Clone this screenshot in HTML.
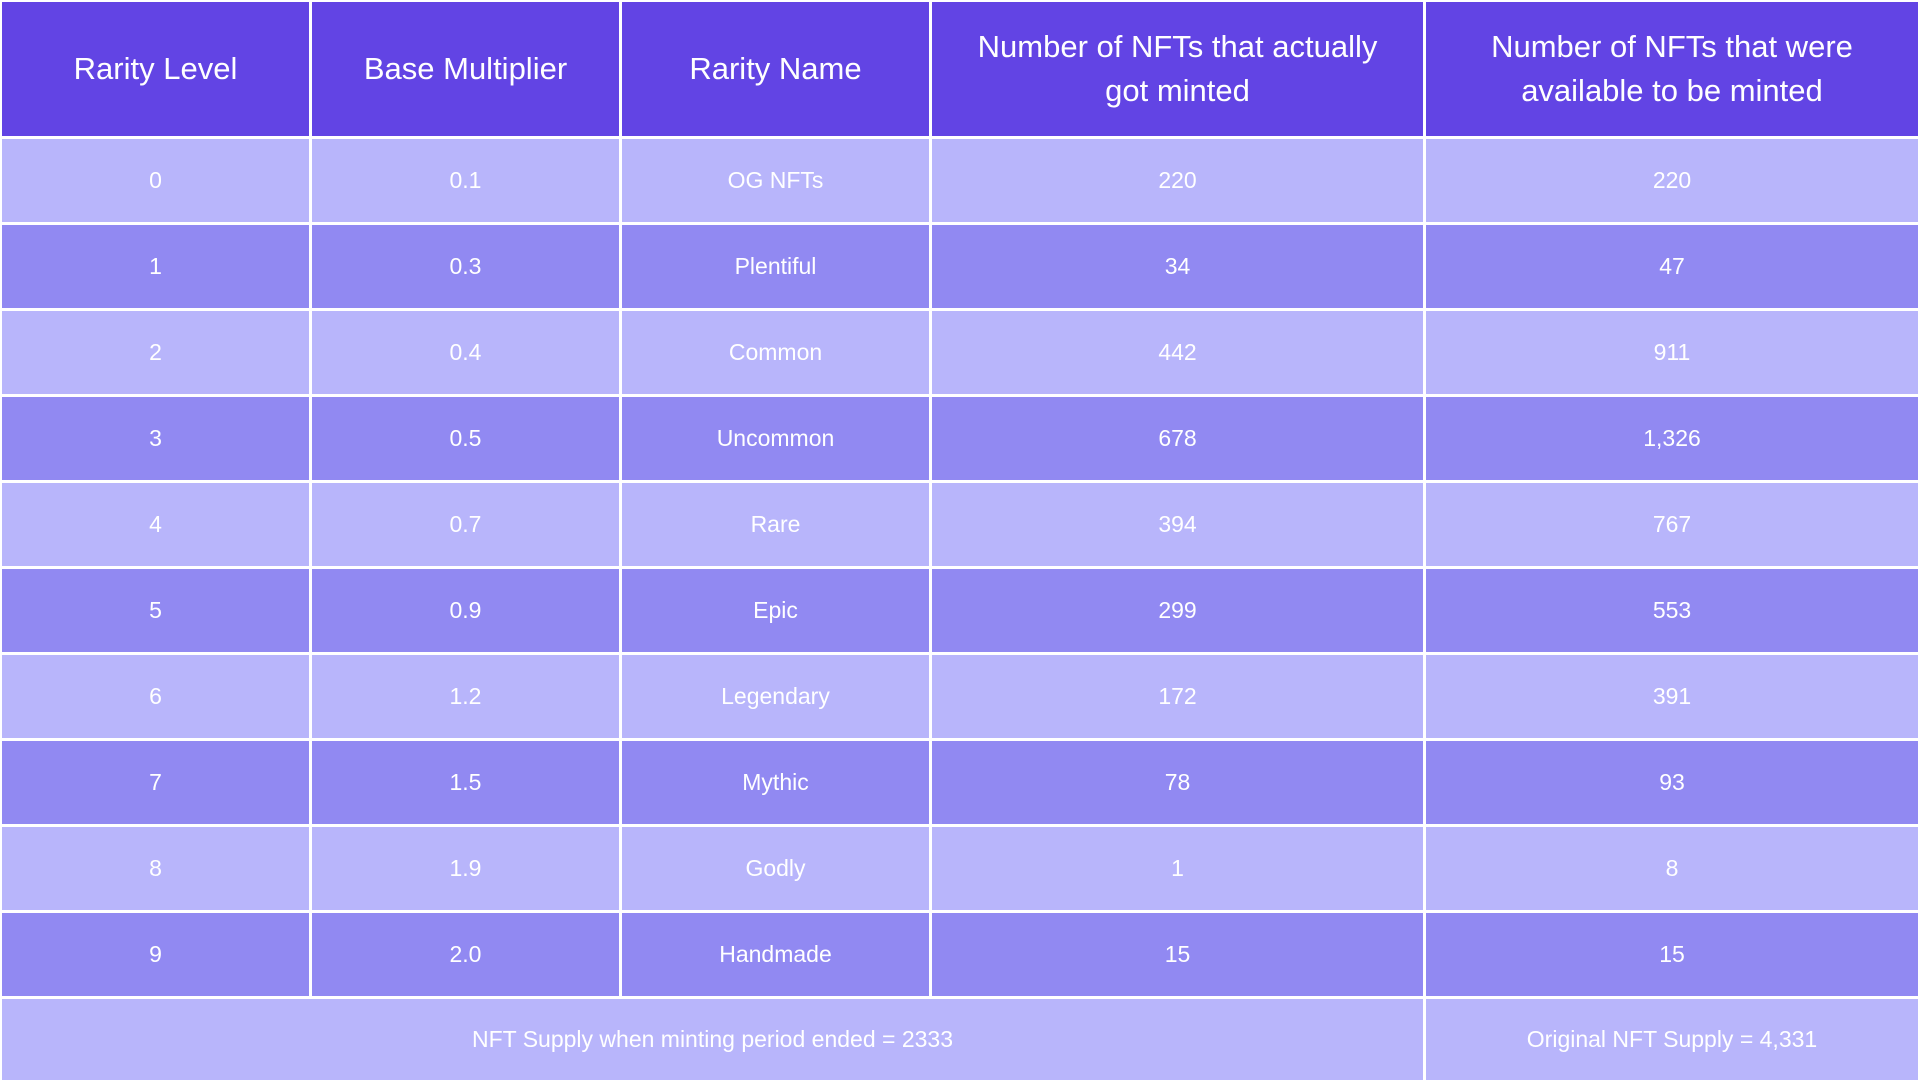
<!DOCTYPE html>
<html><head><meta charset="utf-8"><style>
html,body{margin:0;padding:0;width:1920px;height:1080px;overflow:hidden;background:#fff}
.g{position:absolute;left:2px;top:2px;width:1916px;height:1078px;display:grid;
grid-template-columns:307px 307px 307px 491px 1fr;
grid-template-rows:134px repeat(10,83px) 1fr;gap:3px;background:#fff;
font-family:"Liberation Sans Narrow","Liberation Sans",sans-serif;color:#fff}
.g div{display:flex;align-items:center;justify-content:center;text-align:center}
.h{background:#6244e4;font-size:31px;line-height:44px}
.l{background:#b8b5fb;font-size:23px}
.d{background:#9189f2;font-size:23px}
</style></head><body><div class="g">
<div class="h">Rarity Level</div><div class="h">Base Multiplier</div><div class="h">Rarity Name</div><div class="h">Number of NFTs that actually<br>got minted</div><div class="h">Number of NFTs that were<br>available to be minted</div>
<div class="l">0</div><div class="l">0.1</div><div class="l">OG NFTs</div><div class="l">220</div><div class="l">220</div>
<div class="d">1</div><div class="d">0.3</div><div class="d">Plentiful</div><div class="d">34</div><div class="d">47</div>
<div class="l">2</div><div class="l">0.4</div><div class="l">Common</div><div class="l">442</div><div class="l">911</div>
<div class="d">3</div><div class="d">0.5</div><div class="d">Uncommon</div><div class="d">678</div><div class="d">1,326</div>
<div class="l">4</div><div class="l">0.7</div><div class="l">Rare</div><div class="l">394</div><div class="l">767</div>
<div class="d">5</div><div class="d">0.9</div><div class="d">Epic</div><div class="d">299</div><div class="d">553</div>
<div class="l">6</div><div class="l">1.2</div><div class="l">Legendary</div><div class="l">172</div><div class="l">391</div>
<div class="d">7</div><div class="d">1.5</div><div class="d">Mythic</div><div class="d">78</div><div class="d">93</div>
<div class="l">8</div><div class="l">1.9</div><div class="l">Godly</div><div class="l">1</div><div class="l">8</div>
<div class="d">9</div><div class="d">2.0</div><div class="d">Handmade</div><div class="d">15</div><div class="d">15</div>
<div class="l" style="grid-column:1/5">NFT Supply when minting period ended = 2333</div><div class="l">Original NFT Supply = 4,331</div>
</div></body></html>
